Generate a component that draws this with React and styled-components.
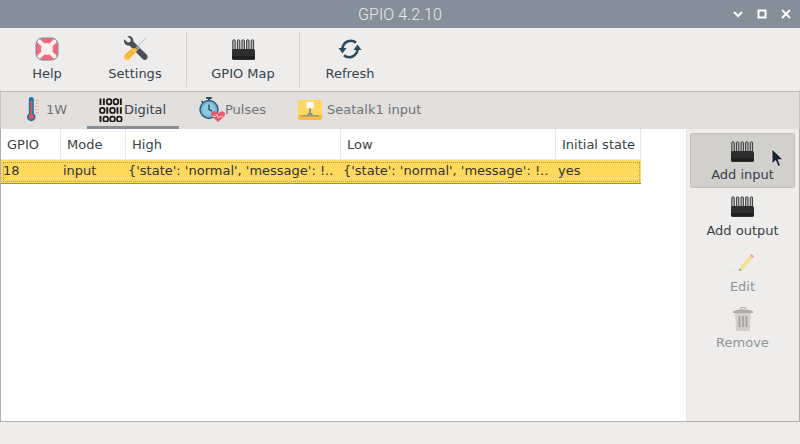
import React from 'react'
import styled, { createGlobalStyle } from 'styled-components'

const GlobalStyle = createGlobalStyle`
  html, body {
    margin: 0;
    padding: 0;
    background: #eeedeb;
  }
  #root {
    width: 800px;
    height: 444px;
  }
`

const PinsIcon = () => (
  <svg width="23" height="21" viewBox="0 0 23 21">
    {[2, 6.6, 11.2, 15.8, 20.4].map((x) => (
      <path key={x} d={`M${x - 1.2} 12V1.8c0-1.4 2.4-1.4 2.4 0V12`} fill="#b9b9b7" stroke="#3a3a3a" strokeWidth="1" />
    ))}
    <path d="M1 10h21l1 1.500V20l-1 1H1l-1-1v-8.500z" fill="#2e2e2e" />
    <rect x="0" y="17" width="23" height="3" fill="#1e1e1e" />
  </svg>
)

const HelpIcon = () => (
  <svg width="24" height="24" viewBox="0 0 24 24">
    <defs>
      <clipPath id="buoy">
        <rect x="1" y="1" width="22" height="22" rx="6.500" />
      </clipPath>
    </defs>
    <rect x="1" y="1" width="22" height="22" rx="6.500" fill="#f4687f" />
    <path d="M0 0l24 24M24 0L0 24" stroke="#f7f1f0" strokeWidth="4.200" clipPath="url(#buoy)" />
    <circle cx="12" cy="12" r="6" fill="#f7f1f0" />
    <rect x="1" y="1" width="22" height="22" rx="6.500" fill="none" stroke="#7f8790" strokeWidth="1" />
  </svg>
)

const SettingsIcon = () => (
  <svg width="26" height="26" viewBox="0 0 26 26">
    <path d="M24.500 1.500L13 13" stroke="#b9c0d6" strokeWidth="1" />
    <path d="M2.200 3.200l3.600 3.400 2.400-.6.700-2.400L5.400.2C8.600-.6 12 2 11.400 5.600l13.400 13.200c1.200 1.400 1 3.200 0 4.200-1.200 1.200-3 1.200-4.200-.1L7.400 9.600C3.800 10.200 1.200 7 2.200 3.200z" fill="#4a4f57" />
    <path d="M15.600 9.600l2.400 2.400-2 2.200-2.400-2.400z" fill="#9aa0a8" />
    <path d="M13.400 12.200l2 2-1.400 2.400-6.800 6.600c-1.200 1.200-3.400 1-4.400-.2-1-1.200-1-3 .2-4.200l6.800-6.600z" fill="#fbc13f" />
    <path d="M9 14l-5.600 5.600M11.400 16l-5.600 5.600" stroke="#e89b25" strokeWidth="1" />
  </svg>
)

const RefreshIcon = () => (
  <svg width="24" height="24" viewBox="0 0 24 24" fill="none">
    <path d="M18 5.600A8.400 8.400 0 0 0 4.500 11.500" stroke="#2c4a5e" strokeWidth="2.600" />
    <path d="M6 18.400A8.400 8.400 0 0 0 19.500 12.500" stroke="#2c4a5e" strokeWidth="2.600" />
    <path d="M0.500 11h8l-4 5.500z" fill="#2c4a5e" />
    <path d="M15.500 13h8l-4-5.500z" fill="#2c4a5e" />
  </svg>
)

const ThermometerIcon = () => (
  <svg width="13" height="25" viewBox="0 0 13 25">
    <path d="M1.800 2.600a2.500 2.500 0 0 1 5 0v13.800a4.300 4.300 0 1 1-5 0z" fill="#1c76a8" />
    <rect x="3.300" y="4" width="2" height="14" fill="#ee4d4d" />
    <circle cx="4.300" cy="19.800" r="2.500" fill="#ee4d4d" />
    <path d="M8.500 3.500h3M8.500 6.500h3M8.500 9.500h3M8.500 12.500h3M8.500 15.500h3" stroke="#ef9a9a" strokeWidth="1.200" strokeDasharray="1.500 .5" />
  </svg>
)

// 1 is a bar, 0 a ring: the icon is a picture of bits, in three rows
const BinaryIcon = () => {
  const rows = ['11001', '01011', '1000']
  return (
    <svg width="24" height="24" viewBox="0 0 24 24">
      {rows.map((bits, r) => {
        let x = 0.5
        return bits.split('').map((b, i) => {
          const left = x
          x += b === '1' ? 3.4 : 6.8
          return b === '1' ? (
            <rect key={`${r}-${i}`} x={left} y={r * 8.7 + 0.5} width="1.900" height="6.500" fill="#1a1a1a" />
          ) : (
            <rect key={`${r}-${i}`} x={left + 0.5} y={r * 8.7 + 1.200} width="4.600" height="5.100" rx="2" fill="none" stroke="#1a1a1a" strokeWidth="1.700" />
          )
        })
      })}
    </svg>
  )
}

const PulsesIcon = () => (
  <svg width="26" height="25" viewBox="0 0 26 25">
    <rect x="7" y="0" width="6" height="2" rx="1" fill="#2c4a5e" />
    <rect x="9" y="1.500" width="2" height="3" fill="#2c4a5e" />
    <path d="M2.500 4l2 2" stroke="#2c4a5e" strokeWidth="1.600" />
    <circle cx="10" cy="12.500" r="9" fill="#6fb3d4" stroke="#2c5f7e" strokeWidth="1.400" />
    <circle cx="10" cy="12.500" r="6.400" fill="#8cc8e2" />
    <path d="M10 7.500v5l3 1.600" stroke="#243b4a" strokeWidth="1.200" fill="none" />
    <path d="M19 25l-6-5.400c-3-3 .9-7.200 4-4.600l2 1.600 2-1.600c3.100-2.600 7 1.600 4 4.600z" fill="#f0566d" />
    <path d="M13.600 19.400h3l1.200-2 1.600 3.600 1.200-1.600h3" stroke="#fde3c8" strokeWidth="0.900" fill="none" />
  </svg>
)

const SeatalkIcon = () => (
  <svg width="24" height="20" viewBox="0 0 24 20">
    <rect x="0" y="0" width="24" height="20" rx="2.500" fill="#fdd866" />
    <path d="M0 15h24v2.500a2.500 2.500 0 0 1-2.500 2.500h-19A2.500 2.500 0 0 1 0 17.500z" fill="#f9bd46" />
    <rect x="8.500" y="2" width="7" height="6.500" fill="#fdfcf6" />
    <rect x="11" y="8.500" width="2" height="6" fill="#8f9089" />
    <rect x="3" y="15.200" width="18" height="1.300" fill="#8f9089" />
    <rect x="9.500" y="13" width="5" height="2.400" fill="#8f9089" />
  </svg>
)

const PencilIcon = () => (
  <svg width="24" height="18" viewBox="0 0 24 18">
    <path d="M0 16.500h6" stroke="#c4c4c2" strokeWidth="0.800" strokeDasharray="1 1.400" />
    <path d="M8 17l1-4 10-11.500 3 2.600L12 16z" fill="#f6dc8e" />
    <path d="M19 1.500L20.200 0l2.800 2.300-1 1.800z" fill="#ef8b96" />
    <path d="M8 17l.6-2.400 1.900 1.500z" fill="#7c7468" />
  </svg>
)

const TrashIcon = () => (
  <svg width="20" height="24" viewBox="0 0 20 24">
    <path d="M7 2a3 1.600 0 0 1 6 0" stroke="#b2aeaa" strokeWidth="1.200" fill="none" />
    <path d="M0 4.500c5-3 15-3 20 0V6H0z" fill="#a5a19e" />
    <path d="M2 6h16l-1 16.500c0 1-.8 1.500-1.500 1.500h-11c-.8 0-1.500-.5-1.500-1.500z" fill="#cfcbc7" />
    <path d="M6.500 9v11M10 9v11M13.500 9v11" stroke="#9a9693" strokeWidth="1.800" />
  </svg>
)

const CursorIcon = () => (
  <svg width="13" height="20" viewBox="0 0 13 20">
    <path d="M1 1v15l3.600-3.400 2.400 6 2.600-1-2.400-5.800h5z" fill="#1c2033" stroke="#f4f4f4" strokeWidth="0.800" />
  </svg>
)

const tools = [
  { label: 'Help', icon: <HelpIcon />, width: 94 },
  { label: 'Settings', icon: <SettingsIcon />, width: 82, after: 10 },
  { sep: true },
  { label: 'GPIO Map', icon: <PinsIcon />, width: 112 },
  { sep: true },
  { label: 'Refresh', icon: <RefreshIcon />, width: 100 },
]

const tabs = [
  { label: '1W', icon: <ThermometerIcon />, left: 26, gap: 6, width: 86 },
  { label: 'Digital', icon: <BinaryIcon />, left: 12, gap: 1, width: 92, active: true },
  { label: 'Pulses', icon: <PulsesIcon />, left: 20, gap: 0, width: 100 },
  { label: 'Seatalk1 input', icon: <SeatalkIcon />, left: 19, gap: 5, width: 140 },
]

const columns = ['GPIO', 'Mode', 'High', 'Low', 'Initial state']
const row = [
  '18',
  'input',
  "{'state': 'normal', 'message': !..",
  "{'state': 'normal', 'message': !..",
  'yes',
]

const sideActions = [
  { label: 'Add input', icon: <PinsIcon />, hovered: true },
  { label: 'Add output', icon: <PinsIcon /> },
  { label: 'Edit', icon: <PencilIcon />, disabled: true },
  { label: 'Remove', icon: <TrashIcon />, disabled: true },
]

export default function App() {
  return (
    <Window>
      <GlobalStyle />
      <TitleBar>
        <TitleText>GPIO 4.2.10</TitleText>
        <WindowControls>
          <svg width="10" height="10" viewBox="0 0 10 10">
            <path d="M1 3l4 4 4-4" stroke="#fff" strokeWidth="2" fill="none" />
          </svg>
          <svg width="10" height="10" viewBox="0 0 10 10">
            <rect x="1.500" y="1.500" width="7" height="7" stroke="#fff" strokeWidth="2" fill="none" />
          </svg>
          <svg width="10" height="10" viewBox="0 0 10 10">
            <path d="M1 1l8 8M9 1l-8 8" stroke="#fff" strokeWidth="2" fill="none" />
          </svg>
        </WindowControls>
      </TitleBar>

      <Toolbar>
        {tools.map((t, i) =>
          t.sep ? (
            <ToolSeparator key={i} />
          ) : (
            <ToolButton key={t.label} $width={t.width} $after={t.after}>
              <ToolIcon>{t.icon}</ToolIcon>
              <span>{t.label}</span>
            </ToolButton>
          )
        )}
      </Toolbar>

      <TabBar>
        {tabs.map((t) => (
          <Tab key={t.label} $active={t.active} $width={t.width} $left={t.left} $gap={t.gap}>
            {t.icon}
            <span>{t.label}</span>
          </Tab>
        ))}
      </TabBar>

      <Content>
        <TablePane>
          <HeaderRow>
            {columns.map((c) => (
              <HeaderCell key={c}>{c}</HeaderCell>
            ))}
          </HeaderRow>
          <DataRow>
            {row.map((c, i) => (
              <DataCell key={i}>{c}</DataCell>
            ))}
            <FocusBox />
          </DataRow>
        </TablePane>
        <SidePanel>
          {sideActions.map((a) => (
            <SideButton key={a.label} $hovered={a.hovered} $disabled={a.disabled}>
              <SideIcon $disabled={a.disabled}>{a.icon}</SideIcon>
              <span>{a.label}</span>
              {a.hovered && (
                <Cursor>
                  <CursorIcon />
                </Cursor>
              )}
            </SideButton>
          ))}
        </SidePanel>
      </Content>
      <StatusBar />
    </Window>
  )
}

const COLS = '60px 65px 215px 215px 85px'

const Window = styled.div`
  width: 800px;
  height: 444px;
  display: flex;
  flex-direction: column;
  overflow: hidden;
  background: #eeedeb;
  font-family: "DejaVu Sans", sans-serif;
  font-size: 13px;
  color: #2e3436;
`

const TitleBar = styled.div`
  position: relative;
  height: 28px;
  flex: none;
  display: flex;
  align-items: center;
  justify-content: center;
  background: #858f99;
`

const TitleText = styled.div`
  font-family: Roboto, sans-serif;
  font-weight: 300;
  font-size: 16px;
  letter-spacing: 0.1px;
  color: #e9ecef;
`

const WindowControls = styled.div`
  position: absolute;
  right: 9px;
  top: 9px;
  display: flex;
  gap: 14px;
  svg {
    display: block;
  }
`

const Toolbar = styled.div`
  height: 63px;
  flex: none;
  display: flex;
  align-items: stretch;
  box-sizing: border-box;
  padding: 4px 0 3px;
`

const ToolSeparator = styled.div`
  width: 1px;
  margin: 0 0 1px;
  background: #d3d1ce;
`

const ToolButton = styled.div`
  width: ${(p) => p.$width}px;
  margin-right: ${(p) => p.$after || 0}px;
  display: flex;
  flex-direction: column;
  align-items: center;
  color: #37424a;
  line-height: 16px;
`

const ToolIcon = styled.div`
  height: 26px;
  margin: 4px 0 4px;
  display: flex;
  align-items: center;
  justify-content: center;
  svg {
    display: block;
  }
`

const TabBar = styled.div`
  height: 38px;
  flex: none;
  box-sizing: border-box;
  display: flex;
  background: #e2dfdc;
  border-top: 1px solid #b8b6b2;
  border-left: 1px solid #c8c6c2;
  border-right: 1px solid #c8c6c2;
`

const Tab = styled.div`
  width: ${(p) => p.$width}px;
  box-sizing: border-box;
  display: flex;
  align-items: center;
  gap: ${(p) => p.$gap}px;
  padding: 1px 0 0 ${(p) => p.$left}px;
  color: ${(p) => (p.$active ? '#37424a' : '#6d7378')};
  border-bottom: 3px solid ${(p) => (p.$active ? '#858f99' : 'transparent')};
  white-space: nowrap;
  svg {
    display: block;
    flex: none;
  }
`

const Content = styled.div`
  flex: 1;
  min-height: 0;
  display: flex;
  background: #fff;
  border: 1px solid #b0afab;
  border-top: 0;
`

const TablePane = styled.div`
  width: 685px;
  background: #fff;
`

const HeaderRow = styled.div`
  display: grid;
  grid-template-columns: ${COLS};
  width: 640px;
  height: 31px;
  box-sizing: border-box;
  border-bottom: 1px solid #e8e7e5;
`

const HeaderCell = styled.div`
  display: flex;
  align-items: center;
  padding-left: 6px;
  box-sizing: border-box;
  border-right: 1px solid #e8e7e5;
  color: #3a3f42;
`

const DataRow = styled.div`
  position: relative;
  display: grid;
  grid-template-columns: ${COLS};
  width: 640px;
  height: 24px;
  box-sizing: border-box;
  background: #ffd95c;
  border-bottom: 1px solid #8a8c8e;
`

const DataCell = styled.div`
  display: flex;
  align-items: center;
  padding: 0 0 3px 2px;
  white-space: nowrap;
  overflow: hidden;
  color: #333;
`

const FocusBox = styled.div`
  position: absolute;
  inset: 2px 1px 1px 2px;
  border: 1px dotted #b09a45;
  pointer-events: none;
`

const SidePanel = styled.div`
  flex: 1;
  box-sizing: border-box;
  padding: 4px 4px 0 3px;
  background: #eeedeb;
  border-left: 1px solid #e6e5e3;
`

const SideButton = styled.div`
  position: relative;
  height: ${(p) => (p.$hovered ? '55px' : '56px')};
  box-sizing: border-box;
  display: flex;
  flex-direction: column;
  align-items: center;
  padding-top: 5px;
  line-height: 16px;
  border-radius: 2px;
  color: ${(p) => (p.$disabled ? '#8f9499' : '#37424a')};
  background: ${(p) => (p.$hovered ? '#d2d0cd' : 'transparent')};
  border: 1px solid ${(p) => (p.$hovered ? '#c3c1be' : 'transparent')};
  span {
    margin-top: ${(p) => (p.$hovered ? '3px' : '4px')};
  }
`

const SideIcon = styled.div`
  height: 25px;
  display: flex;
  align-items: center;
  justify-content: center;
  opacity: ${(p) => (p.$disabled ? 0.85 : 1)};
  svg {
    display: block;
  }
`

const Cursor = styled.div`
  position: absolute;
  left: 80px;
  top: 14px;
  svg {
    display: block;
  }
`

const StatusBar = styled.div`
  height: 22px;
  flex: none;
  background: #eeedeb;
`
